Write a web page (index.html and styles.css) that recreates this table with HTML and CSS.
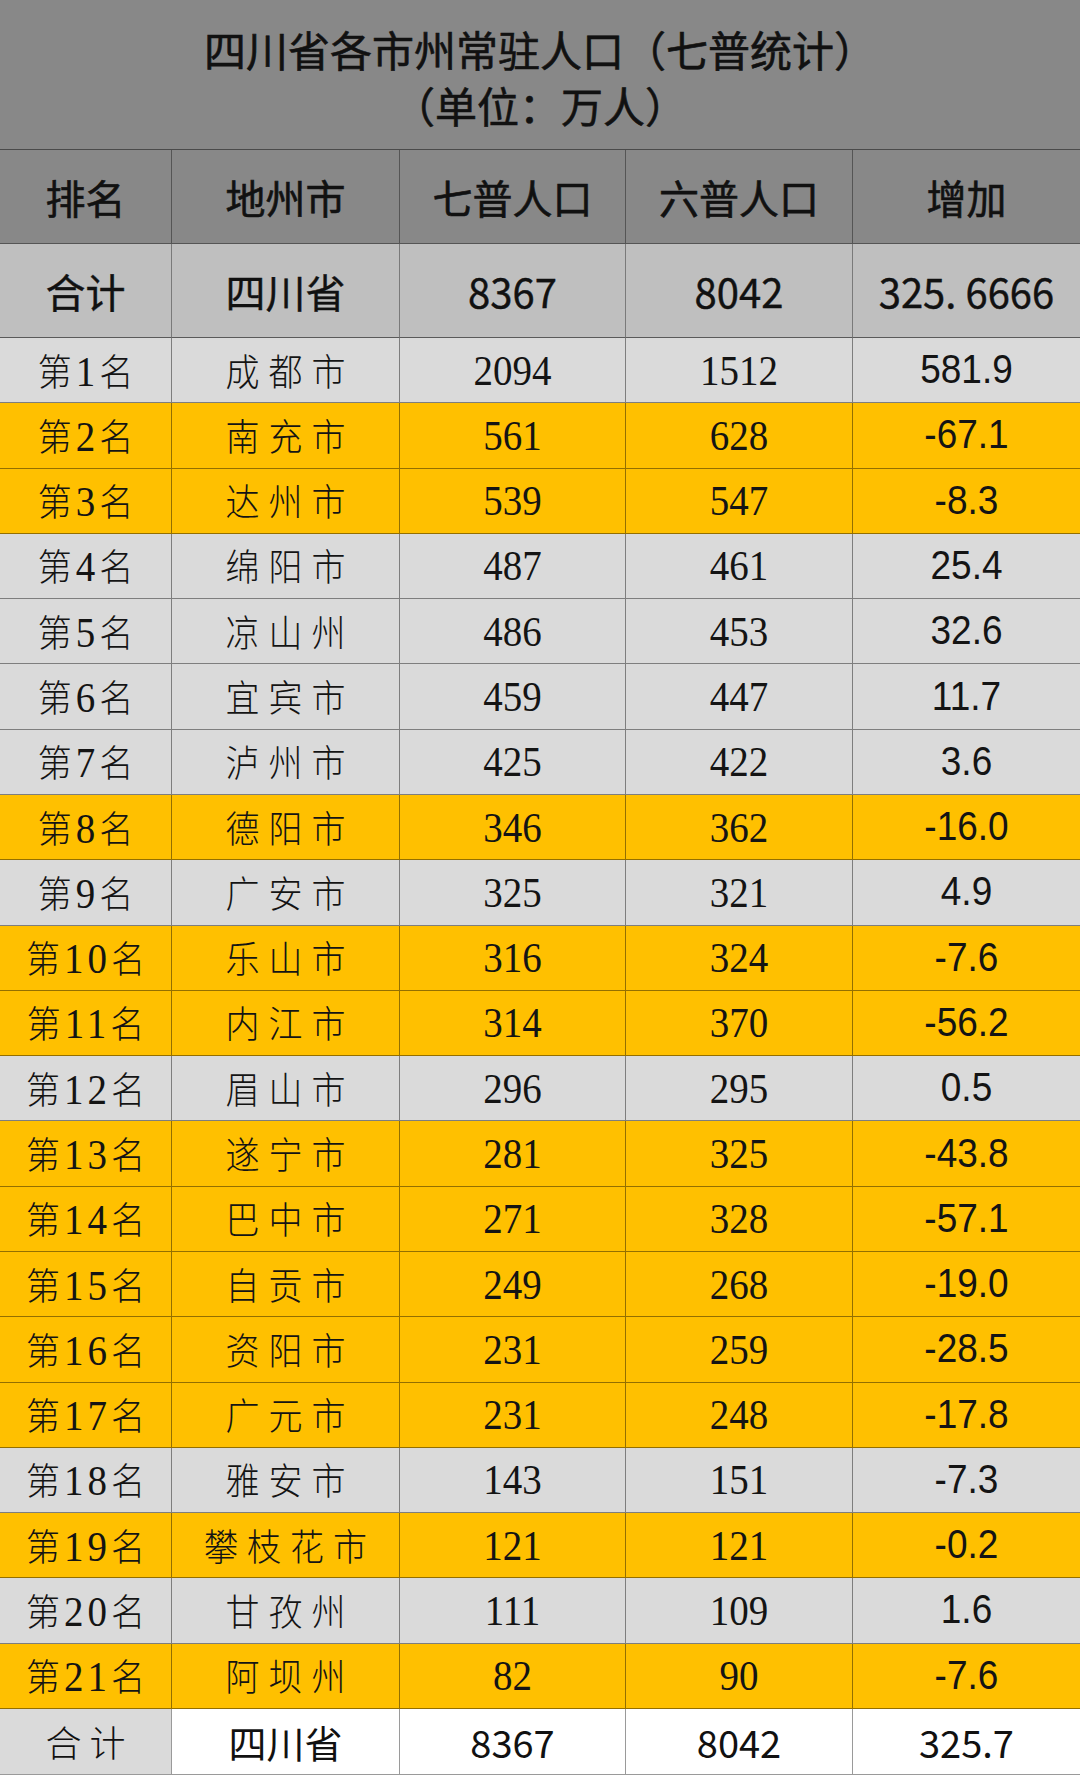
FILE: index.html
```html
<!DOCTYPE html>
<html>
<head>
<meta charset="utf-8">
<title>四川省各市州常驻人口（七普统计）</title>
<link rel="stylesheet" href="styles.css">
</head>
<body>
<div class="sheet">
  <div class="title">
    <div class="title-line">四川省各市州常驻人口（七普统计）</div>
    <div class="title-line">（单位：万人）</div>
  </div>

  <div class="row head">
    <div class="cell">排名</div>
    <div class="cell">地州市</div>
    <div class="cell">七普人口</div>
    <div class="cell">六普人口</div>
    <div class="cell">增加</div>
  </div>

  <div class="row sum">
    <div class="cell">合计</div>
    <div class="cell">四川省</div>
    <div class="cell">8367</div>
    <div class="cell">8042</div>
    <div class="cell">325<span class="dot">.</span>6666</div>
  </div>

  <div class="row data gray">
    <div class="cell rank"><span class="t"><span class="c">第</span>1<span class="c">名</span></span></div>
    <div class="cell city"><span class="t">成都市</span></div>
    <div class="cell num"><span class="t">2094</span></div>
    <div class="cell num"><span class="t">1512</span></div>
    <div class="cell inc"><span class="t">581.9</span></div>
  </div>
  <div class="row data gold">
    <div class="cell rank"><span class="t"><span class="c">第</span>2<span class="c">名</span></span></div>
    <div class="cell city"><span class="t">南充市</span></div>
    <div class="cell num"><span class="t">561</span></div>
    <div class="cell num"><span class="t">628</span></div>
    <div class="cell inc"><span class="t">-67.1</span></div>
  </div>
  <div class="row data gold">
    <div class="cell rank"><span class="t"><span class="c">第</span>3<span class="c">名</span></span></div>
    <div class="cell city"><span class="t">达州市</span></div>
    <div class="cell num"><span class="t">539</span></div>
    <div class="cell num"><span class="t">547</span></div>
    <div class="cell inc"><span class="t">-8.3</span></div>
  </div>
  <div class="row data gray">
    <div class="cell rank"><span class="t"><span class="c">第</span>4<span class="c">名</span></span></div>
    <div class="cell city"><span class="t">绵阳市</span></div>
    <div class="cell num"><span class="t">487</span></div>
    <div class="cell num"><span class="t">461</span></div>
    <div class="cell inc"><span class="t">25.4</span></div>
  </div>
  <div class="row data gray">
    <div class="cell rank"><span class="t"><span class="c">第</span>5<span class="c">名</span></span></div>
    <div class="cell city"><span class="t">凉山州</span></div>
    <div class="cell num"><span class="t">486</span></div>
    <div class="cell num"><span class="t">453</span></div>
    <div class="cell inc"><span class="t">32.6</span></div>
  </div>
  <div class="row data gray">
    <div class="cell rank"><span class="t"><span class="c">第</span>6<span class="c">名</span></span></div>
    <div class="cell city"><span class="t">宜宾市</span></div>
    <div class="cell num"><span class="t">459</span></div>
    <div class="cell num"><span class="t">447</span></div>
    <div class="cell inc"><span class="t">11.7</span></div>
  </div>
  <div class="row data gray">
    <div class="cell rank"><span class="t"><span class="c">第</span>7<span class="c">名</span></span></div>
    <div class="cell city"><span class="t">泸州市</span></div>
    <div class="cell num"><span class="t">425</span></div>
    <div class="cell num"><span class="t">422</span></div>
    <div class="cell inc"><span class="t">3.6</span></div>
  </div>
  <div class="row data gold">
    <div class="cell rank"><span class="t"><span class="c">第</span>8<span class="c">名</span></span></div>
    <div class="cell city"><span class="t">德阳市</span></div>
    <div class="cell num"><span class="t">346</span></div>
    <div class="cell num"><span class="t">362</span></div>
    <div class="cell inc"><span class="t">-16.0</span></div>
  </div>
  <div class="row data gray">
    <div class="cell rank"><span class="t"><span class="c">第</span>9<span class="c">名</span></span></div>
    <div class="cell city"><span class="t">广安市</span></div>
    <div class="cell num"><span class="t">325</span></div>
    <div class="cell num"><span class="t">321</span></div>
    <div class="cell inc"><span class="t">4.9</span></div>
  </div>
  <div class="row data gold">
    <div class="cell rank"><span class="t"><span class="c">第</span>10<span class="c">名</span></span></div>
    <div class="cell city"><span class="t">乐山市</span></div>
    <div class="cell num"><span class="t">316</span></div>
    <div class="cell num"><span class="t">324</span></div>
    <div class="cell inc"><span class="t">-7.6</span></div>
  </div>
  <div class="row data gold">
    <div class="cell rank"><span class="t"><span class="c">第</span>11<span class="c">名</span></span></div>
    <div class="cell city"><span class="t">内江市</span></div>
    <div class="cell num"><span class="t">314</span></div>
    <div class="cell num"><span class="t">370</span></div>
    <div class="cell inc"><span class="t">-56.2</span></div>
  </div>
  <div class="row data gray">
    <div class="cell rank"><span class="t"><span class="c">第</span>12<span class="c">名</span></span></div>
    <div class="cell city"><span class="t">眉山市</span></div>
    <div class="cell num"><span class="t">296</span></div>
    <div class="cell num"><span class="t">295</span></div>
    <div class="cell inc"><span class="t">0.5</span></div>
  </div>
  <div class="row data gold">
    <div class="cell rank"><span class="t"><span class="c">第</span>13<span class="c">名</span></span></div>
    <div class="cell city"><span class="t">遂宁市</span></div>
    <div class="cell num"><span class="t">281</span></div>
    <div class="cell num"><span class="t">325</span></div>
    <div class="cell inc"><span class="t">-43.8</span></div>
  </div>
  <div class="row data gold">
    <div class="cell rank"><span class="t"><span class="c">第</span>14<span class="c">名</span></span></div>
    <div class="cell city"><span class="t">巴中市</span></div>
    <div class="cell num"><span class="t">271</span></div>
    <div class="cell num"><span class="t">328</span></div>
    <div class="cell inc"><span class="t">-57.1</span></div>
  </div>
  <div class="row data gold">
    <div class="cell rank"><span class="t"><span class="c">第</span>15<span class="c">名</span></span></div>
    <div class="cell city"><span class="t">自贡市</span></div>
    <div class="cell num"><span class="t">249</span></div>
    <div class="cell num"><span class="t">268</span></div>
    <div class="cell inc"><span class="t">-19.0</span></div>
  </div>
  <div class="row data gold">
    <div class="cell rank"><span class="t"><span class="c">第</span>16<span class="c">名</span></span></div>
    <div class="cell city"><span class="t">资阳市</span></div>
    <div class="cell num"><span class="t">231</span></div>
    <div class="cell num"><span class="t">259</span></div>
    <div class="cell inc"><span class="t">-28.5</span></div>
  </div>
  <div class="row data gold">
    <div class="cell rank"><span class="t"><span class="c">第</span>17<span class="c">名</span></span></div>
    <div class="cell city"><span class="t">广元市</span></div>
    <div class="cell num"><span class="t">231</span></div>
    <div class="cell num"><span class="t">248</span></div>
    <div class="cell inc"><span class="t">-17.8</span></div>
  </div>
  <div class="row data gray">
    <div class="cell rank"><span class="t"><span class="c">第</span>18<span class="c">名</span></span></div>
    <div class="cell city"><span class="t">雅安市</span></div>
    <div class="cell num"><span class="t">143</span></div>
    <div class="cell num"><span class="t">151</span></div>
    <div class="cell inc"><span class="t">-7.3</span></div>
  </div>
  <div class="row data gold">
    <div class="cell rank"><span class="t"><span class="c">第</span>19<span class="c">名</span></span></div>
    <div class="cell city"><span class="t">攀枝花市</span></div>
    <div class="cell num"><span class="t">121</span></div>
    <div class="cell num"><span class="t">121</span></div>
    <div class="cell inc"><span class="t">-0.2</span></div>
  </div>
  <div class="row data gray">
    <div class="cell rank"><span class="t"><span class="c">第</span>20<span class="c">名</span></span></div>
    <div class="cell city"><span class="t">甘孜州</span></div>
    <div class="cell num"><span class="t">111</span></div>
    <div class="cell num"><span class="t">109</span></div>
    <div class="cell inc"><span class="t">1.6</span></div>
  </div>
  <div class="row data gold">
    <div class="cell rank"><span class="t"><span class="c">第</span>21<span class="c">名</span></span></div>
    <div class="cell city"><span class="t">阿坝州</span></div>
    <div class="cell num"><span class="t">82</span></div>
    <div class="cell num"><span class="t">90</span></div>
    <div class="cell inc"><span class="t">-7.6</span></div>
  </div>

  <div class="row foot">
    <div class="cell foot-label">合计</div>
    <div class="cell">四川省</div>
    <div class="cell">8367</div>
    <div class="cell">8042</div>
    <div class="cell">325.7</div>
  </div>
</div>
</body>
</html>
```

FILE: styles.css
```css
html, body {
  margin: 0;
  padding: 0;
  background: #ffffff;
}

body {
  width: 1080px;
  height: 1776px;
  overflow: hidden;
  font-family: "Noto Sans CJK SC", "Noto Sans", sans-serif;
  color: #111111;
}

.sheet {
  display: flex;
  flex-direction: column;
  width: 1080px;
}

.title {
  height: 150px;
  box-sizing: border-box;
  padding-top: 4px;
  background: #888888;
  border-bottom: 1px solid #4a4a4a;
  display: flex;
  flex-direction: column;
  justify-content: center;
  align-items: center;
  font-size: 42px;
  font-weight: 400;
  line-height: 56px;
  color: #111111;
  -webkit-text-stroke: 0.6px #111111;
}

.row {
  display: grid;
  grid-template-columns: 172px 228px 226px 227px 227px;
}

.cell {
  box-sizing: border-box;
  display: flex;
  align-items: center;
  justify-content: center;
  border-right: 1px solid rgba(0, 0, 0, 0.42);
  border-bottom: 1px solid rgba(0, 0, 0, 0.42);
  white-space: nowrap;
  overflow: hidden;
}

.cell:last-child {
  border-right: none;
}

.head {
  height: 94px;
  background: #888888;
  font-size: 40px;
  font-weight: 400;
  -webkit-text-stroke: 0.6px #111111;
}

.head .cell {
  border-color: #555555;
}

.sum {
  height: 94px;
  background: #bfbfbf;
  font-size: 40px;
  font-weight: 400;
  -webkit-text-stroke: 0.4px #111111;
}

.sum .cell {
  border-right-color: #7a7a7a;
  border-bottom-color: #5a5a5a;
}

.dot {
  margin-right: 9px;
}

.data {
  height: 65.286px;
}

.gray {
  background: #dadada;
}

.gold {
  background: #ffc000;
}

.t {
  display: inline-block;
  transform: scaleY(1.1);
}

.c {
  font-family: "Noto Sans CJK SC", sans-serif;
  font-weight: 300;
  font-size: 34px;
}

.rank {
  font-family: "Liberation Serif", "Tinos", "Times New Roman", "DejaVu Serif", serif;
  font-size: 39px;
  color: #141414;
}

.rank .t {
  letter-spacing: 4px;
  margin-right: -4px;
}

.city {
  font-family: "Noto Sans CJK SC", sans-serif;
  font-weight: 300;
  font-size: 34px;
  color: #141414;
}

.city .t {
  letter-spacing: 9px;
  margin-right: -9px;
}

.num {
  font-family: "Liberation Serif", "Tinos", "Times New Roman", "DejaVu Serif", serif;
  font-size: 39px;
  color: #141414;
}

.inc {
  font-family: "Liberation Sans", "Arimo", "Arial", sans-serif;
  font-size: 37px;
  color: #141414;
}

.foot {
  height: 66px;
  background: #ffffff;
  font-size: 38px;
  font-weight: 400;
}

.foot .cell {
  border-right-color: #9a9a9a;
  border-bottom-color: #9a9a9a;
}

.foot-label {
  background: #dadada;
  font-weight: 300;
  font-size: 36px;
  letter-spacing: 8px;
  padding-left: 8px;
}
```
